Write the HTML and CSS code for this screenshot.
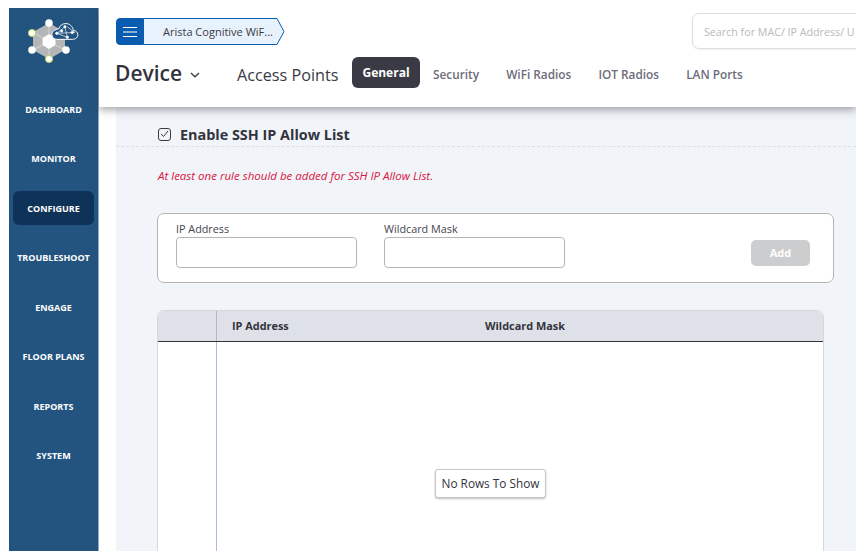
FILE: index.html
```html
<!DOCTYPE html>
<html lang="en">
<head>
<meta charset="utf-8">
<title>Device - General</title>
<link rel="stylesheet" href="styles.css">
</head>
<body>
<div class="app">
  <aside class="sidebar">
    <div class="logo">
      <svg width="60" height="48" viewBox="0 0 60 48">
        <polygon points="21,4 37,13 37,31 21,40 5,31 5,13" fill="#b4b6b8"/>
        <polygon points="21,15 27.500,19 27.500,26 21,30 14.500,26 14.500,19" fill="#fff"/>
        <g stroke="#d4d6d8" stroke-width="1"><line x1="21" y1="4" x2="21" y2="15"/><line x1="21" y1="30" x2="21" y2="40"/><line x1="5" y1="13" x2="14.500" y2="19"/><line x1="5" y1="31" x2="14.500" y2="26"/><line x1="37" y1="31" x2="27.500" y2="26"/></g>
        <circle cx="21" cy="4" r="3.800" fill="#fff"/>
        <circle cx="4" cy="14" r="3.600" fill="#fff" stroke="#b6d35a" stroke-width="1"/>
        <circle cx="4" cy="31" r="3.800" fill="#fff"/>
        <circle cx="21" cy="40" r="3.600" fill="#fff" stroke="#b6d35a" stroke-width="1"/>
        <circle cx="38" cy="31" r="3.800" fill="#fff"/>
        <g transform="translate(4.500,0.500) scale(.81)">
          <path d="M30 24.500h19c5 0 7-3 7-5.500 0-3-2.500-5.500-5.500-5.500C49.500 8 45.500 5 41 5c-4 0-7 2-8.500 6.500C27.500 12 24 15 24 18.500c0 3.500 2.500 6 6 6z" fill="#22547f" stroke="#fff" stroke-width="1.200"/>
          <g stroke="#fff" stroke-width=".8" fill="#fff"><path d="M30 17L40 9l3 13-13-5 22-1-9-7" fill="none"/><circle cx="30" cy="17" r="1.500"/><circle cx="40" cy="9" r="1.500"/><circle cx="43" cy="22" r="1.500"/><circle cx="36" cy="14" r="1.500"/><circle cx="49" cy="16" r="1.500"/></g>
        </g>
      </svg>
    </div>
    <nav class="nav">
      <a class="nav-item">DASHBOARD</a>
      <a class="nav-item">MONITOR</a>
      <a class="nav-item active">CONFIGURE</a>
      <a class="nav-item">TROUBLESHOOT</a>
      <a class="nav-item">ENGAGE</a>
      <a class="nav-item">FLOOR PLANS</a>
      <a class="nav-item">REPORTS</a>
      <a class="nav-item">SYSTEM</a>
    </nav>
  </aside>
  <main class="main">
    <header class="header">
      <div class="header-top">
        <div class="crumb">
          <button class="menu-btn" aria-label="Menu">
            <svg width="16" height="12" viewBox="0 0 16 12"><path d="M1 1.500h14M1 6h14M1 10.500h14" stroke="#fff" stroke-width="1.100"/></svg>
          </button>
          <div class="crumb-label">
            <span>Arista Cognitive WiF...</span>
            <svg class="crumb-tip" width="10" height="27" viewBox="0 0 10 27"><path d="M0 .5h2L9 13.500 2 26.500H0" fill="#e8f2fc" stroke="#0a5cb0" stroke-width="1"/></svg>
          </div>
        </div>
        <div class="search">Search for MAC/ IP Address/ U</div>
      </div>
      <div class="header-bottom">
        <div class="device">Device
          <svg width="10" height="6" viewBox="0 0 10 6"><path d="M1 1l4 3.800L9 1" fill="none" stroke="#3a3a44" stroke-width="1.300"/></svg>
        </div>
        <div class="section">Access Points</div>
        <div class="tabs">
          <span class="tab current">General</span>
          <span class="tab">Security</span>
          <span class="tab">WiFi Radios</span>
          <span class="tab">IOT Radios</span>
          <span class="tab">LAN Ports</span>
        </div>
      </div>
    </header>
    <section class="content">
      <div class="title-row">
        <span class="checkbox">
          <svg width="9" height="8" viewBox="0 0 9 8"><path d="M1 4l2.500 2.500L8 1" fill="none" stroke="#3a3a44" stroke-width="1"/></svg>
        </span>
        <span class="title">Enable SSH IP Allow List</span>
      </div>
      <div class="inner">
        <p class="error">At least one rule should be added for SSH IP Allow List.</p>
        <form class="card">
          <label class="field"><span>IP Address</span><span class="input"></span></label>
          <label class="field"><span>Wildcard Mask</span><span class="input"></span></label>
          <span class="add">Add</span>
        </form>
        <div class="grid">
          <div class="grid-head">
            <div class="col-check"></div>
            <div class="col-ip">IP Address</div>
            <div class="col-mask">Wildcard Mask</div>
          </div>
          <div class="grid-body">
            <div class="col-check"></div>
            <div class="overlay">No Rows To Show</div>
          </div>
        </div>
      </div>
    </section>
  </main>
</div>
</body>
</html>
```
FILE: styles.css
```css
* { box-sizing: border-box; }
html, body { margin: 0; height: 100%; background: #fff; overflow: hidden; }
body { padding: 8px 9px 4px 9px; font-family: "Open Sans", "Noto Sans", sans-serif; color: #33333d; }
.app { display: flex; width: 847px; height: 543px; overflow: hidden; }

.sidebar { flex: 0 0 90px; background: #22547f; border-right: 1px solid #8fa9c4; display: flex; flex-direction: column; align-items: center; }
.logo { height: 76px; width: 100%; padding: 11px 0 0 19px; }
.logo svg { display: block; }
.nav { display: flex; flex-direction: column; align-items: center; gap: 15.500px; padding-top: 8px; width: 100%; }
.nav-item { width: 81px; height: 34px; border-radius: 6px; display: flex; align-items: center; justify-content: center; color: #fff; font-size: 9px; font-weight: 700; white-space: nowrap; }
.nav-item.active { background: #0f3358; }

.main { flex: 1; min-width: 0; display: flex; flex-direction: column; position: relative; }
.header { height: 99px; flex: none; background: #fff; box-shadow: 0 3px 8px rgba(60,60,70,.45); position: relative; z-index: 2; padding: 5px 0 0 17px; }
.header-top { display: flex; justify-content: space-between; align-items: flex-start; height: 44px; }
.crumb { display: flex; margin-top: 5px; height: 27px; }
.menu-btn { width: 28px; height: 27px; padding: 0; border: 1px solid #0a5cb0; border-radius: 4px 0 0 4px; background: #0a5cb0; display: flex; align-items: center; justify-content: center; }
.crumb-label { position: relative; width: 131px; background: #e8f2fc; border: 1px solid #0a5cb0; border-left: 0; border-right: 0; font-size: 11px; line-height: 25px; color: #3a3a44; padding-left: 19px; white-space: nowrap; }
.crumb-tip { position: absolute; left: 131px; top: -1px; }
.search { width: 190px; height: 36px; margin-right: -26px; flex: none; border: 1px solid #dedede; border-radius: 7px 0 0 7px; font-size: 10.700px; line-height: 37px; color: #b9b9c0; padding-left: 11px; white-space: nowrap; overflow: hidden; box-shadow: 0 1px 2px rgba(0,0,0,.06); }
.header-bottom { display: flex; align-items: center; height: 31px; }
.device { width: 122px; font-size: 21px; font-weight: 600; color: #33333d; display: flex; align-items: center; gap: 8px; margin-left: -1px; padding-top: 1px; }
.device svg { margin-top: 4px; }
.section { width: 115px; font-size: 16.200px; color: #3a3a44; padding-top: 5px; white-space: nowrap; }
.tabs { display: flex; align-items: center; gap: 27.200px; }
.tab { font-size: 11.800px; font-weight: 600; color: #6c6c7a; padding-top: 3px; white-space: nowrap; }
.tab.current { width: 68px; height: 31px; margin-right: -14.200px; padding: 0 0 1px; background: #3a3a44; color: #fff; font-size: 12px; font-weight: 700; border-radius: 6px; display: flex; align-items: center; justify-content: center; }

.content { flex: 1; min-height: 0; margin-left: 17px; background: #f1f4f9; overflow: hidden; }
.title-row { height: 40px; border-bottom: 1px dashed #dcdfe4; display: flex; align-items: center; padding: 15px 0 0 42px; }
.checkbox { width: 13px; height: 13px; border: 1px solid #3a3a44; border-radius: 3px; display: flex; align-items: center; justify-content: center; }
.title { margin-left: 9px; font-size: 14.400px; font-weight: 700; color: #33333d; white-space: nowrap; }
.inner { padding: 0 22px 0 41px; }
.error { margin: 22px 0 0 1px; font-size: 11.500px; line-height: 14px; font-style: italic; color: #d8173f; height: 15px; white-space: nowrap; }
.card { margin-top: 29px; height: 70px; background: #fff; border: 1px solid #b5b5b5; border-radius: 7px; display: flex; padding: 7px 23px 0 18px; gap: 27px; }
.field { display: flex; flex-direction: column; width: 181px; font-size: 10.800px; line-height: 16px; color: #45454f; }
.input { display: block; height: 31px; background: #fff; border: 1px solid #b5b5b5; border-radius: 4px; }
.add { margin: 19px 0 0 auto; width: 59px; height: 26px; padding-bottom: 1px; background: #cccdce; border-radius: 5px; color: #fff; font-size: 11px; font-weight: 700; display: flex; align-items: center; justify-content: center; }
.grid { position: relative; margin: 27px 10px 0 0; height: 260px; background: #fff; border: 1px solid #d5d7da; border-radius: 7px 7px 0 0; overflow: hidden; }
.grid-head { display: flex; height: 31px; background: #dee1e7; border-bottom: 1px solid #33333d; font-size: 10.900px; font-weight: 700; color: #33333d; line-height: 29px; }
.col-check { width: 59px; flex: none; border-right: 1px solid #b2b6bd; }
.col-ip { width: 268px; padding-left: 15px; }
.col-mask { flex: 1; }
.grid-body { display: flex; height: 229px; }
.grid-body .col-check { border-right-color: #a9bdd3; }
.overlay { position: absolute; left: 277px; top: 158px; width: 111px; height: 29px; background: #fff; border: 1px solid #c6c6c6; border-radius: 3px; box-shadow: 0 1px 2px rgba(0,0,0,.25); font-size: 11.800px; line-height: 27px; text-align: center; color: #33333d; white-space: nowrap; }
```
